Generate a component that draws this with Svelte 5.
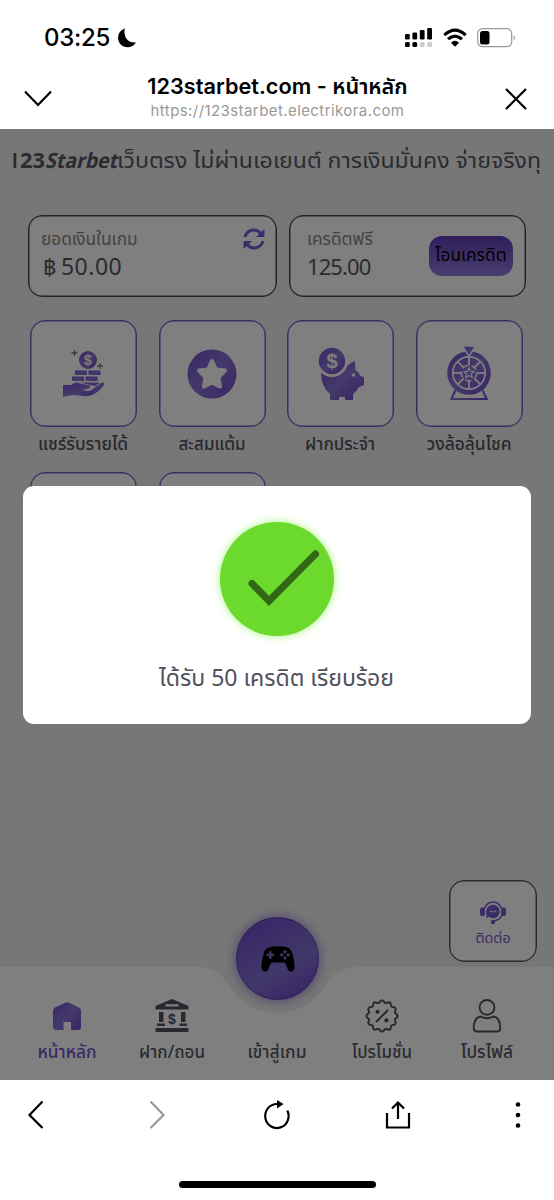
<script lang="ts">
  type Tile = { id: string; label: string; width: number };

  const tiles: Tile[] = [
    { id: 'share', label: 'แชร์รับรายได้', width: 90 },
    { id: 'points', label: 'สะสมแต้ม', width: 67 },
    { id: 'deposit', label: 'ฝากประจำ', width: 70 },
    { id: 'wheel', label: 'วงล้อลุ้นโชค', width: 85 },
    { id: 'more-1', label: '', width: 0 },
    { id: 'more-2', label: '', width: 0 }
  ];

  const navItems = [
    { id: 'home', label: 'หน้าหลัก', width: 59 },
    { id: 'bank', label: 'ฝาก/ถอน', width: 66 },
    { id: 'play', label: 'เข้าสู่เกม', width: 59 },
    { id: 'promo', label: 'โปรโมชั่น', width: 60 },
    { id: 'profile', label: 'โปรไฟล์', width: 52 }
  ];

  let active = $state('home');

  // wavy outline of the discount badge
  function badgePath(cx: number, cy: number, r: number, depth: number, lobes: number): string {
    const pts: string[] = [];
    for (let i = 0; i < 120; i++) {
      const a = (i / 120) * Math.PI * 2;
      const rr = r + depth * Math.cos(a * lobes);
      pts.push(`${(cx + Math.sin(a) * rr).toFixed(2)} ${(cy - Math.cos(a) * rr).toFixed(2)}`);
    }
    return `M${pts.join('L')}Z`;
  }

  const spokes = [0, 45, 90, 135, 180, 225, 270, 315];
</script>

<div class="screen">
  <div class="status-bar">
    <div class="clock">
      <span>03:25</span>
      <svg width="20" height="20" viewBox="0 0 20 20"><path d="M8 .5A9.6 9.6 0 1 0 19 14.5Q12 15 9 10Q6.5 5 8 .5Z" fill="#000" /></svg>
    </div>
    <div class="signals">
      <svg width="28" height="21" viewBox="0 0 28 21">
        <g fill="#000">
          <rect x="0" y="7" width="4.8" height="5.6" rx="1.3" />
          <rect x="7.4" y="5.5" width="4.8" height="7.1" rx="1.3" />
          <rect x="14.8" y="3" width="4.8" height="9.6" rx="1.3" />
          <rect x="22.2" y="1" width="4.8" height="11.6" rx="1.3" />
          <rect x="0" y="15" width="4.8" height="5" rx="1.5" />
          <rect x="7.4" y="15" width="4.8" height="5" rx="1.5" />
        </g>
        <g fill="#ccc">
          <rect x="14.8" y="15" width="4.8" height="5" rx="1.5" />
          <rect x="22.2" y="15" width="4.8" height="5" rx="1.5" />
        </g>
      </svg>
      <svg width="24" height="20" viewBox="0 0 24 20">
        <g fill="none" stroke="#000" stroke-width="3.1">
          <path d="M1.3 7.1Q12-3 22.7 7.1" />
          <path d="M5 11.2Q12 5 19 11.2" />
        </g>
        <path d="M8 14.7Q12 11 16 14.7L12 18.8Z" fill="#000" />
      </svg>
      <svg width="39" height="20" viewBox="0 0 39 20">
        <rect x="0.7" y="0.7" width="34" height="18" rx="5" fill="none" stroke="#999" stroke-width="1.2" />
        <rect x="3" y="3" width="9.5" height="13.5" rx="2.5" fill="#000" />
        <path d="M36.6 7Q39.5 9.8 36.6 12.6Z" fill="#999" />
      </svg>
    </div>
  </div>

  <header class="title-bar">
    <svg width="28" height="18" viewBox="0 0 28 18"><path d="M1 1.5L14 15L27 1.5" class="line" /></svg>
    <div class="title">
      <strong>123starbet.com - หน้าหลัก</strong>
      <span>https://123starbet.electrikora.com</span>
    </div>
    <svg width="22" height="22" viewBox="0 0 22 22"><path d="M1 1L21 21M21 1L1 21" class="line" /></svg>
  </header>

  <main>
    <svg class="defs" width="0" height="0" aria-hidden="true">
      <defs>
        <linearGradient id="violet" x1="0" y1="0" x2="1" y2="1">
          <stop offset="0" stop-color="#6f4bd0" />
          <stop offset="0.5" stop-color="#8974d2" />
          <stop offset="1" stop-color="#6c45cc" />
        </linearGradient>
      </defs>
    </svg>

    <div class="marquee">
      <svg width="527" height="44" viewBox="0 0 527 44">
        <g fill="#565763">
          <rect x="0.5" y="24" width="2.8" height="15" />
          <text x="7" y="39" class="bold" textLength="25" lengthAdjust="spacingAndGlyphs">23</text>
          <text x="32" y="39" class="bold italic" textLength="72" lengthAdjust="spacingAndGlyphs">Starbet</text>
          <text x="104" y="39" class="thai" textLength="424" lengthAdjust="spacingAndGlyphs">เว็บตรง ไม่ผ่านเอเยนต์ การเงินมั่นคง จ่ายจริงทุ</text>
        </g>
      </svg>
    </div>

    <section class="balances">
      <div class="balance wallet">
        <div class="amounts">
          <span class="caption">ยอดเงินในเกม</span>
          <span class="amount"><span class="baht">฿</span>50.00</span>
        </div>
        <svg class="refresh" width="22" height="22" viewBox="0 0 22 22">
          <g fill="none" stroke="#765bd2" stroke-width="3">
            <path d="M2 9A9 9 0 0 1 17.8 5.5" />
            <path d="M20 13A9 9 0 0 1 4.2 16.5" />
          </g>
          <path d="M21.5 1V9H13Z M0.5 21V13H9Z" fill="#765bd2" />
        </svg>
      </div>
      <div class="balance credit">
        <div class="amounts">
          <span class="caption">เครดิตฟรี</span>
          <span class="amount free">125.00</span>
        </div>
        <button>โอนเครดิต</button>
      </div>
    </section>

    <section class="tiles">
      {#each tiles as tile (tile.id)}
        <div class="tile">
          <div class="tile-box">
            {#if tile.id === 'share'}
              <svg width="44" height="50" viewBox="0 0 44 50" fill="url(#violet)">
                <circle cx="26" cy="11" r="9" />
                <text x="26" y="16" class="coin" font-size="14">$</text>
                <path d="M12.5 1V7M9.5 4H15.5M38 14V20M35 17H41" stroke="#777" stroke-width="1.3" />
                <rect x="13" y="21.5" width="12" height="4.4" />
                <rect x="26.5" y="21.5" width="12" height="4.4" />
                <rect x="10" y="27.5" width="12" height="4.4" />
                <rect x="23.5" y="27.5" width="12" height="4.4" />
                <path d="M19 33.5H38L33 37L28 36Z" />
                <path d="M1 36H9Q14 32 18 34.5L28 36.5Q30 40.5 20 40.5Q28 44 32 39L39 34Q43 32.5 42 36Q38 42 31 45.5Q26 48.5 18 46.5Q10 45 1 48Z" />
              </svg>
            {:else if tile.id === 'points'}
              <svg width="50" height="50" viewBox="0 0 50 50">
                <circle cx="25" cy="25" r="24.5" fill="url(#violet)" />
                <path d="M25 12L29 20.5L38 21.6L31.5 28.2L33 37.5L25 33.4L17 37.5L18.5 28.2L12 21.6L21 20.5Z" fill="#fff" stroke="#fff" stroke-width="4" stroke-linejoin="round" />
              </svg>
            {:else if tile.id === 'deposit'}
              <svg width="46" height="54" viewBox="0 0 46 54" fill="url(#violet)">
                <path d="M3 25L28 20Q33 15 37 14L37.5 23Q41 25 42 29L46 30V38L41 40Q38 45 35 47V53H27V50H21V53H12V47Q3 40 3 25Z" />
                <circle cx="35.5" cy="28" r="1.8" fill="#fff" />
                <circle cx="14" cy="14" r="14.6" stroke="#fff" stroke-width="2.8" />
                <text x="14" y="21" class="coin" font-size="20">$</text>
              </svg>
            {:else if tile.id === 'wheel'}
              <svg width="44" height="54" viewBox="0 0 44 54">
                <path d="M8.5 43L4.5 52H39.5L35.5 43" fill="none" stroke="url(#violet)" stroke-width="2.2" />
                <circle cx="22" cy="26" r="21.8" fill="url(#violet)" />
                <circle cx="22" cy="26" r="16.2" fill="none" stroke="#fff" stroke-width="1.7" />
                {#each spokes as angle (angle)}
                  <path d="M22 10V18.5" stroke="#fff" stroke-width="1.8" transform="rotate({angle} 22 26)" />
                {/each}
                <circle cx="22" cy="26" r="7.7" fill="none" stroke="#fff" stroke-width="1.5" stroke-dasharray="6 3.67" />
                <path d="M22 20.6L23.4 24.2L27.2 24.4L24.3 26.9L25.3 30.6L22 28.5L18.7 30.6L19.7 26.9L16.8 24.4L20.6 24.2Z" fill="none" stroke="#fff" stroke-width="1.1" />
                <path d="M15.5 -1H28.5L22 9.5Z" fill="url(#violet)" stroke="#fff" stroke-width="1.5" />
              </svg>
            {/if}
          </div>
          {#if tile.label}
            <svg class="label" width="106" height="34" viewBox="0 0 106 34">
              <text x={(106 - tile.width) / 2} y="23" textLength={tile.width} lengthAdjust="spacingAndGlyphs">{tile.label}</text>
            </svg>
          {/if}
        </div>
      {/each}
    </section>

    <a class="contact" href="#contact">
      <svg width="26" height="24" viewBox="0 0 26 24">
        <path d="M4 8Q7 1 13 1T22 8" fill="none" stroke="#765ad0" stroke-width="1.6" />
        <circle cx="13" cy="10.5" r="6.8" fill="#765ad0" />
        <path d="M6.5 17.5V11H13Z" fill="#765ad0" />
        <rect x="0" y="6.5" width="5" height="8.5" rx="2" fill="#765ad0" />
        <rect x="21" y="6.5" width="5" height="8.5" rx="2" fill="#765ad0" />
        <path d="M22 14Q20 19 13.5 20" fill="none" stroke="#765ad0" stroke-width="1.6" />
        <circle cx="13" cy="21" r="2.2" fill="#765ad0" />
        <path d="M9.8 10.5H11.2M12.3 10.5H13.7M14.8 10.5H16.2" stroke="#fff" stroke-width="1.5" />
      </svg>
      <span>ติดต่อ</span>
    </a>

    <nav>
      <svg class="nav-shape" width="554" height="113" viewBox="0 0 554 113">
        <path d="M0 0H195C216 0 223 9 230 20C240 36 257 46 277 46C297 46 314 36 324 20C331 9 338 0 359 0H554V113H0Z" fill="#fff" />
      </svg>
      {#each navItems as item (item.id)}
        <button class="nav-item" class:active={active === item.id} onclick={() => (active = item.id)}>
          {#if item.id === 'home'}
            <svg width="30" height="34" viewBox="0 0 30 34">
              <path d="M3 8.5L12.5 4Q15 2.5 17.5 4L27 8.5Q29 9.5 29 12V28Q29 31 26 31H19V23H11.5V31H4Q1 31 1 28V12Q1 9.5 3 8.5Z" fill="url(#violet)" />
            </svg>
          {:else if item.id === 'bank'}
            <svg width="34" height="34" viewBox="0 0 34 34" fill="#50535e">
              <path fill-rule="evenodd" d="M17 0L33.5 7V10.5H0.5V7ZM10.5 7.5H23.5V5.3H10.5Z" />
              <path d="M4 13H8.5V23H4ZM26 13H30.5V23H26ZM2 24.5H10V27H2ZM24.5 24.5H32V27H24.5ZM0.5 29H33.5V33H0.5Z" />
              <text x="17" y="25" font-size="14" text-anchor="middle" font-weight="700" font-family="Liberation Sans">$</text>
            </svg>
          {:else if item.id === 'play'}
            <span class="play-space"></span>
          {:else if item.id === 'promo'}
            <svg width="34" height="34" viewBox="0 0 34 34" fill="none" stroke="#50535e" stroke-width="2">
              <path d={badgePath(17, 17, 14.5, 1.1, 12)} />
              <path d="M23 11L11 23" />
              <circle cx="12.6" cy="12.8" r="2.1" fill="#50535e" stroke="none" />
              <circle cx="21.4" cy="21.3" r="2.1" fill="#50535e" stroke="none" />
            </svg>
          {:else}
            <svg width="30" height="34" viewBox="0 0 30 34" fill="none" stroke="#50535e" stroke-width="1.9">
              <circle cx="15" cy="8.4" r="7.4" />
              <path d="M9 17.5Q15 21 21 17.5Q28 18 28.3 29Q28.3 32.5 25 32.5H5Q1.7 32.5 1.7 29Q2 18 9 17.5Z" />
            </svg>
          {/if}
          <svg class="nav-label" width="70" height="28" viewBox="0 0 70 28">
            <text x={(70 - item.width) / 2} y="20" textLength={item.width} lengthAdjust="spacingAndGlyphs">{item.label}</text>
          </svg>
        </button>
      {/each}
      <button class="play" aria-label="play">
        <svg width="34" height="26" viewBox="0 0 34 26">
          <path d="M8 1.5Q10 .3 17 .3T26 1.5Q30 2 31.5 8Q34 18 33.5 22Q32.5 26 29 25.5Q27 25 25.5 20Q24.5 16.5 22 16.5H12Q9.5 16.5 8.5 20Q7 25 5 25.5Q1.5 26 .5 22Q0 18 2.5 8Q4 2 8 1.5Z" fill="#000" />
          <path d="M9.3 5.3V12.7M5.6 9H13" stroke="#8068c4" stroke-width="2.5" />
          <g fill="#8068c4">
            <circle cx="24" cy="5.7" r="1.7" />
            <circle cx="24" cy="12.1" r="1.7" />
            <circle cx="20.8" cy="8.9" r="1.7" />
            <circle cx="27.2" cy="8.9" r="1.7" />
          </g>
        </svg>
      </button>
    </nav>

    <div class="overlay">
      <div class="modal" role="dialog">
        <div class="check">
          <svg width="114" height="114" viewBox="0 0 114 114"><path d="M32 61.5L49 79L95.5 32" fill="none" stroke="#336617" stroke-width="7" stroke-linecap="round" /></svg>
        </div>
        <svg width="236" height="40" viewBox="0 0 236 40">
          <text x="0" y="28" class="message" textLength="235" lengthAdjust="spacingAndGlyphs">ได้รับ 50 เครดิต เรียบร้อย</text>
        </svg>
      </div>
    </div>
  </main>

  <footer>
    <div class="tools">
      <svg width="30" height="30" viewBox="0 0 30 30"><path d="M21.5 1.5L8.5 15L21.5 28" class="line" /></svg>
      <svg width="30" height="30" viewBox="0 0 30 30"><path d="M8.5 1.5L21.5 15L8.5 28" class="line faded" /></svg>
      <svg width="30" height="30" viewBox="0 0 30 30">
        <path d="M25.3 10.5A11.7 12 0 1 1 15 4H17" class="line" />
        <path d="M15 0L21.5 4L15 8.5Z" fill="#000" />
      </svg>
      <svg width="30" height="30" viewBox="0 0 30 30"><path d="M4 13V27.5H26V13M15 19V3M9 8.5L15 2.5L21 8.5" class="line" /></svg>
      <svg width="30" height="30" viewBox="0 0 30 30"><circle cx="15" cy="4.5" r="2.3" /><circle cx="15" cy="15" r="2.3" /><circle cx="15" cy="25.5" r="2.3" /></svg>
    </div>
    <div class="home-indicator"></div>
  </footer>
</div>

<style>
  :global(body) { margin: 0; background: #fff; }

  .screen {
    width: 554px;
    height: 1200px;
    display: flex;
    flex-direction: column;
    overflow: hidden;
    background: #fff;
    font-family: 'Noto Sans Thai', 'Kanit', 'Prompt', 'Noto Sans', sans-serif;
  }

  svg { display: block; flex: none; overflow: visible; }

  button { font-family: inherit; border: 0; padding: 0; background: none; }

  .line { fill: none; stroke: #000; stroke-width: 2.2; }
  .faded { stroke: #999; }

  .status-bar {
    height: 58px;
    box-sizing: border-box;
    padding: 17px 38px 0 44px;
    display: flex;
    align-items: center;
    justify-content: space-between;
  }

  .clock {
    display: flex;
    align-items: center;
    gap: 7px;
    font: 500 24px/42px Inter, sans-serif;
    letter-spacing: -0.3px;
  }

  .signals { display: flex; align-items: center; gap: 10px; }

  .title-bar {
    height: 71px;
    box-sizing: border-box;
    padding: 10px 27px 0 24px;
    display: flex;
    align-items: center;
    justify-content: space-between;
  }

  .title {
    position: relative;
    left: -1px;
    display: flex;
    flex-direction: column;
    align-items: center;
    padding-bottom: 3px;
    white-space: nowrap;
  }

  .title strong { font: 600 21.7px/27px Inter, 'Noto Sans Thai', sans-serif; }
  .title span { font: 400 15px/22px Inter, sans-serif; letter-spacing: 0.42px; color: #999; }

  main {
    position: relative;
    height: 951px;
    display: flex;
    flex-direction: column;
    background: #eee;
    color: #565763;
  }

  .defs { position: absolute; }

  .marquee {
    height: 86px;
    margin: 0 14px 0 13px;
    overflow: hidden;
    font-size: 21px;
  }

  .bold { font-weight: 700; }
  .italic { font-style: italic; }
  .thai { font-size: 22px; }

  .balances { display: flex; gap: 12px; padding: 0 28px; }

  .balance {
    height: 82px;
    box-sizing: border-box;
    border: 1px solid #45464e;
    box-shadow: inset 0 0 0 0.5px #45464e;
    border-radius: 14px;
    background: #fff;
    display: flex;
    justify-content: space-between;
  }

  .wallet { width: 249px; padding: 11px 11px 0 12px; }
  .credit { width: 237px; padding: 11px 12px 0 17px; }

  .amounts { display: flex; flex-direction: column; white-space: nowrap; }
  .caption { font-size: 17.3px; line-height: 26px; color: #858585; }
  .amount { font-size: 23px; line-height: 31px; letter-spacing: 0.5px; }
  .free { font-size: 22px; letter-spacing: -0.9px; }
  .baht { margin: 0 4px 0 2px; }

  .refresh { margin-top: 1px; }

  .credit button {
    width: 84px;
    height: 40px;
    margin-top: 9px;
    border-radius: 13px;
    background: linear-gradient(#603dba, #927bdc);
    color: #000;
    font-size: 17.3px;
    white-space: nowrap;
  }

  .tiles {
    display: grid;
    grid-template-columns: repeat(4, 107px);
    justify-content: space-between;
    row-gap: 12px;
    padding: 23px 31px 0 30px;
  }

  .tile { height: 140px; }

  .tile-box {
    height: 107px;
    box-sizing: border-box;
    border: 1px solid #745bc4;
    box-shadow: inset 0 0 0 0.5px #745bc4;
    border-radius: 15px;
    background: #fff;
    display: flex;
    align-items: center;
    justify-content: center;
  }

  .coin { fill: #fff; text-anchor: middle; font-weight: 700; font-family: 'Liberation Sans', sans-serif; }

  .label { font-size: 17.5px; font-weight: 500; fill: #50515c; }

  .contact {
    position: absolute;
    left: 449px;
    top: 751px;
    width: 88px;
    height: 82px;
    box-sizing: border-box;
    border: 1px solid #55544f;
    box-shadow: inset 0 0 0 0.5px #55544f;
    border-radius: 15px;
    background: #fff;
    display: flex;
    flex-direction: column;
    align-items: center;
    gap: 4px;
    padding-top: 20px;
    font-size: 14.3px;
    line-height: 20px;
    color: #765ad0;
    text-decoration: none;
  }

  nav {
    position: relative;
    height: 113px;
    margin-top: auto;
    box-sizing: border-box;
    padding: 32px 14px 0;
    display: flex;
  }

  .nav-shape { position: absolute; left: 0; top: 0; }

  .nav-item {
    position: relative;
    flex: 1;
    height: 72px;
    display: flex;
    flex-direction: column;
    align-items: center;
    gap: 5px;
    color: #565763;
  }

  .nav-item.active { color: #7452cc; }
  .nav-label { font-size: 17.3px; font-weight: 500; fill: currentColor; }
  .play-space { height: 34px; }

  .play {
    position: absolute;
    left: 236px;
    top: -50px;
    width: 83px;
    height: 83px;
    border: 1px solid #5638a8;
    border-radius: 50%;
    background: linear-gradient(150deg, #6b48cf, #8470d2 60%, #6743cc);
    box-shadow: 0 0 12px #8d76cf;
    display: flex;
    align-items: center;
    justify-content: center;
  }

  .overlay {
    position: absolute;
    inset: 0;
    background: rgba(0, 0, 0, 0.5);
    display: flex;
    align-items: center;
    justify-content: center;
  }

  .modal {
    width: 508px;
    height: 238px;
    margin-top: 1px;
    box-sizing: border-box;
    padding-top: 36px;
    border-radius: 11px;
    background: #fff;
    display: flex;
    flex-direction: column;
    align-items: center;
    gap: 22px;
  }

  .check {
    width: 114px;
    height: 114px;
    border-radius: 50%;
    background: #6cd92d;
    box-shadow: 0 0 9px #a4f77c;
  }

  .message { font-size: 23px; fill: #50515c; }

  footer {
    flex: 1;
    display: flex;
    flex-direction: column;
    align-items: center;
    justify-content: space-between;
    box-sizing: border-box;
    padding: 20px 21px 12px;
  }

  .tools { width: 100%; display: flex; justify-content: space-between; }

  .home-indicator { width: 197px; height: 7px; border-radius: 4px; background: #000; }
</style>
